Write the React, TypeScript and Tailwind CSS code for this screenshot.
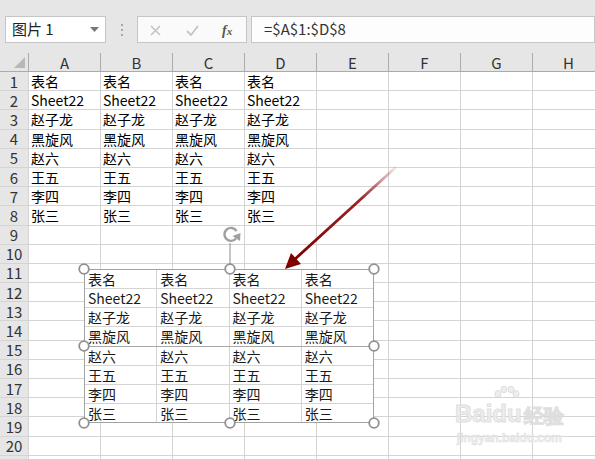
import React from 'react';

const cols = ['A', 'B', 'C', 'D', 'E', 'F', 'G', 'H'];
const names = ['表名', 'Sheet22', '赵子龙', '黑旋风', '赵六', '王五', '李四', '张三'];
const rows = Array.from({ length: 21 }, (_, i) => i + 1);

const handles = [
  [84, 269], [230, 269], [374, 269],
  [84, 346], [374, 346],
  [84, 423], [230, 423], [374, 423],
];

const Toolbar = () => (
  <div className="flex h-[53px] items-start pl-[5px] pt-[16px]">
    <div className="flex h-[27px] w-[101px] items-center justify-between border border-[#c6c6c6] bg-white pl-[6px] pr-[6px] text-[15px] text-[#222]">
      <span>图片 1</span>
      <svg width="9" height="5" viewBox="0 0 9 5"><path d="M0 0h9L4.5 5z" fill="#777" /></svg>
    </div>
    <div className="ml-[15px] mr-[14px] flex h-[27px] flex-col items-center justify-center gap-[3px]">
      <span className="h-[2px] w-[2px] bg-[#a6a6a6]" />
      <span className="h-[2px] w-[2px] bg-[#a6a6a6]" />
      <span className="h-[2px] w-[2px] bg-[#a6a6a6]" />
    </div>
    <div className="relative h-[27px] w-[110px] border border-[#c6c6c6] bg-[#fafafa]">
      <svg className="absolute left-[12px] top-[8px]" width="11" height="11" viewBox="0 0 11 11">
        <path d="M1 1l9 9M10 1l-9 9" stroke="#c4c4c4" strokeWidth="1.6" />
      </svg>
      <svg className="absolute left-[48px] top-[8px]" width="13" height="11" viewBox="0 0 13 11">
        <path d="M1 6l4 4 7-9" stroke="#c4c4c4" strokeWidth="1.8" fill="none" />
      </svg>
      <span className="absolute left-[84px] top-[3px] font-['Liberation_Serif',serif] text-[14px] font-bold italic text-[#555]">
        f<span className="text-[11px]">x</span>
      </span>
    </div>
    <div className="ml-[4px] flex h-[27px] flex-1 items-center border border-[#c6c6c6] bg-[#fdfdfd] pl-[12px] text-[15px] text-[#333]">
      =$A$1:$D$8
    </div>
  </div>
);

const Sheet = () => (
  <div className="flex flex-col">
    <div className="flex h-[19px]">
      <div className="relative w-[29px] shrink-0 border-b border-r border-[#ababab] bg-[#e6e6e6]">
        <svg className="absolute bottom-[3px] right-[3px]" width="11" height="11" viewBox="0 0 11 11">
          <path d="M11 0v11H0z" fill="#b8b8b8" />
        </svg>
      </div>
      {cols.map(c => (
        <div
          key={c}
          className="flex w-[72px] shrink-0 items-center justify-center border-b border-r border-[#ababab] bg-[#e6e6e6] text-[15px] leading-none text-[#333]"
        >
          {c}
        </div>
      ))}
    </div>
    {rows.map(r => (
      <div key={r} className="flex h-[19.2px] shrink-0">
        <div className="flex w-[29px] shrink-0 items-center justify-center border-b border-r border-[#d4d4d4] bg-[#e6e6e6] text-[15px] leading-none text-[#333]">
          {r}
        </div>
        {cols.map((c, ci) => (
          <div
            key={c}
            className="flex w-[72px] shrink-0 items-center whitespace-nowrap border-b border-r border-[#d4d4d4] bg-white pl-[2px] text-[14px] leading-none text-black"
          >
            {ci < 4 && r <= 8 ? names[r - 1] : ''}
          </div>
        ))}
      </div>
    ))}
  </div>
);

const Picture = () => (
  <div className="absolute left-[84px] top-[269px] flex h-[154px] w-[290px] flex-col border-[1.5px] border-[#a3a3a3] bg-white">
    {names.map((n, ri) => (
      <div
        key={n}
        className={
          ri === 7
            ? 'flex flex-1'
            : ri === 3
              ? 'flex flex-1 border-b-[1.5px] border-[#a8a8a8]'
              : 'flex flex-1 border-b border-[#d4d4d4]'
        }
      >
        {[0, 1, 2, 3].map(ci => (
          <div
            key={ci}
            className={
              (ci < 3 ? 'border-r border-[#d4d4d4] ' : '') +
              'flex flex-1 items-center pl-[3px] text-[14px] leading-none text-[#1a1a1a]'
            }
          >
            {n}
          </div>
        ))}
      </div>
    ))}
  </div>
);

const Overlay = () => (
  <svg className="pointer-events-none absolute left-0 top-0" width="595" height="459" viewBox="0 0 595 459">
    <defs>
      <linearGradient id="fade" x1="395" y1="168" x2="300" y2="255" gradientUnits="userSpaceOnUse">
        <stop offset="0" stopColor="#8b0000" stopOpacity="0.1" />
        <stop offset="0.35" stopColor="#8b0000" stopOpacity="0.85" />
        <stop offset="1" stopColor="#800000" stopOpacity="1" />
      </linearGradient>
    </defs>
    <path d="M395 168L294 260" stroke="url(#fade)" strokeWidth="2.8" strokeLinecap="round" />
    <path d="M285 269L291 253L301 264Z" fill="#800000" />
    <line x1="230" y1="243" x2="230" y2="264" stroke="#8c8c8c" strokeWidth="1" />
    <path d="M236 238.5A6.5 6.5 0 1 1 236.5 231" fill="none" stroke="#a0a0a0" strokeWidth="2.4" />
    <path d="M232.5 236l7.5 5 0.5-8z" fill="#a0a0a0" />
    {handles.map(([x, y], i) => (
      <circle key={i} cx={x} cy={y} r="4.8" fill="#fff" stroke="#909090" strokeWidth="1.8" />
    ))}
  </svg>
);

const Watermark = () => (
  <div className="pointer-events-none absolute left-[455px] top-[402px] flex flex-col items-center text-[#ececec] opacity-90">
    <div className="relative flex items-end font-['Liberation_Sans',sans-serif] text-[24px] font-bold leading-none [-webkit-text-stroke:1px_#dcdcdc]">
      <span>Bai</span>
      <span className="relative">
        du
        <svg className="absolute -top-[16px] left-[2px]" width="26" height="18" viewBox="0 0 26 18">
          <g fill="#ededed" stroke="#dadada" strokeWidth="1">
            <ellipse cx="4" cy="8" rx="3" ry="3.5" />
            <ellipse cx="10" cy="3.5" rx="3" ry="3.2" />
            <ellipse cx="17" cy="3.5" rx="3" ry="3.2" />
            <ellipse cx="22" cy="8" rx="3" ry="3.5" />
          </g>
        </svg>
      </span>
      <span className="ml-[2px] text-[20px]">经验</span>
    </div>
    <div className="mt-[6px] font-['Liberation_Sans',sans-serif] text-[12px] font-bold leading-none [-webkit-text-stroke:0.5px_#dcdcdc]">
      jingyan.baidu.com
    </div>
  </div>
);

export default function App() {
  return (
    <div className="relative h-[459px] w-[595px] overflow-hidden bg-[#e6e6e6] font-['Noto_Sans_CJK_SC','Noto_Sans',sans-serif]">
      <Toolbar />
      <Sheet />
      <Picture />
      <Overlay />
      <Watermark />
    </div>
  );
}
